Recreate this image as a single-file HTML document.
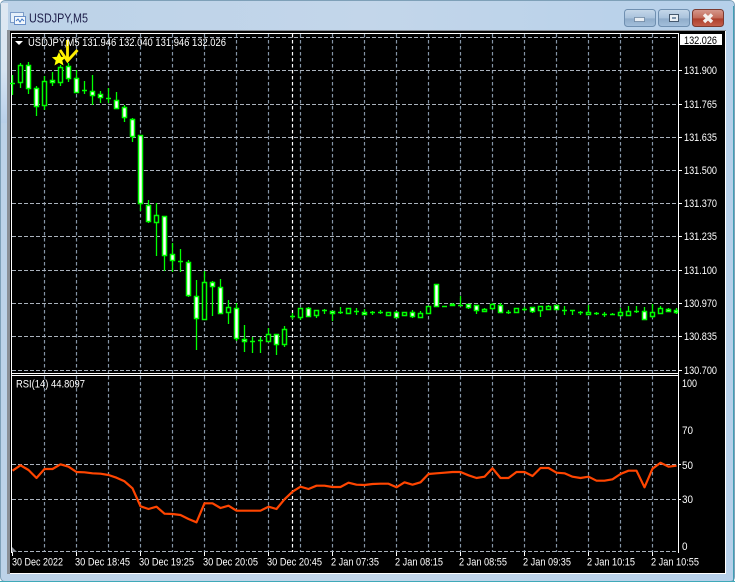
<!DOCTYPE html>
<html><head><meta charset="utf-8"><title>USDJPY,M5</title>
<style>
html,body{margin:0;padding:0;background:#fff;width:736px;height:583px;overflow:hidden}
svg{position:absolute;left:0;top:0;display:block}
text{font-family:"Liberation Sans",sans-serif}
</style></head><body>
<svg width="736" height="583" viewBox="0 0 736 583" xmlns="http://www.w3.org/2000/svg">
<defs>
<linearGradient id="tb" x1="0" y1="0" x2="1" y2="0"><stop offset="0" stop-color="#bcd2e8"/><stop offset=".5" stop-color="#c3d6ea"/><stop offset="1" stop-color="#b6d0ea"/></linearGradient>
<linearGradient id="gl" x1="0" y1="0" x2="0" y2="1"><stop offset="0" stop-color="#dfe8f2"/><stop offset=".55" stop-color="#d8e5f2"/><stop offset="1" stop-color="#b8d0ea"/></linearGradient>
<linearGradient id="btn" x1="0" y1="0" x2="0" y2="1"><stop offset="0" stop-color="#c6d8ea"/><stop offset=".5" stop-color="#a9c2dc"/><stop offset=".55" stop-color="#8facca"/><stop offset="1" stop-color="#a4c0dc"/></linearGradient>
<linearGradient id="cls" x1="0" y1="0" x2="0" y2="1"><stop offset="0" stop-color="#d69a8e"/><stop offset=".5" stop-color="#c26a58"/><stop offset=".55" stop-color="#ad3f2c"/><stop offset="1" stop-color="#c4604c"/></linearGradient>
</defs>
<rect x="0" y="0" width="735" height="582" rx="5" fill="#7ea0b8"/>
<rect x="1" y="1" width="733" height="580" rx="4" fill="url(#tb)"/>
<rect x="1" y="3" width="7" height="120" fill="url(#gl)"/>
<rect x="0" y="581" width="735" height="1" fill="#3fa9b8"/>
<rect x="733" y="6" width="1" height="575" fill="#3f9fb4"/>
<!-- icon -->
<rect x="10.500" y="12.500" width="13" height="10" fill="#e6f0fa" stroke="#7c9cc8"/>
<rect x="14.500" y="16.500" width="11" height="8" fill="#f4f8fc" stroke="#6a90c8"/>
<path d="M16 21l2-2 2 3 2-3 2 2" fill="none" stroke="#3f78c8"/>
<text x="29" y="22.500" font-size="13" fill="#1c1c48" textLength="59" lengthAdjust="spacingAndGlyphs">USDJPY,M5</text>
<!-- buttons -->
<rect x="624.500" y="9.500" width="31" height="17" rx="3" fill="url(#btn)" stroke="#6f8fb0"/>
<rect x="634.500" y="17.500" width="10" height="4" fill="#e8eef4" stroke="#55708c" stroke-width=".6"/>
<rect x="658.500" y="9.500" width="31" height="17" rx="3" fill="url(#btn)" stroke="#6f8fb0"/>
<rect x="669.500" y="14.500" width="9" height="7" fill="#e8eef4" stroke="#44586e"/>
<rect x="672" y="17" width="4" height="2" fill="#7c93ab"/>
<rect x="692.500" y="9.500" width="31" height="17" rx="3" fill="url(#cls)" stroke="#7c3a30"/>
<path d="M704 14.500l8 7.500M712 14.500l-8 7.500" stroke="#f4f0ee" stroke-width="3.400" fill="none"/>
<!-- client -->
<rect x="7" y="30" width="719" height="544" fill="#fff"/>
<rect x="8" y="31" width="717" height="542" fill="#000"/>
<rect x="7" y="30" width="3" height="544" fill="#8a8f96"/>
<rect x="7" y="30" width="719" height="1" fill="#8a8f96"/>
<rect x="11" y="33" width="1" height="520" fill="#fff"/>
<rect x="11" y="33" width="668" height="1" fill="#fff"/>
<rect x="678" y="33" width="1" height="520" fill="#fff"/>
<rect x="11" y="373" width="668" height="1" fill="#fff"/>
<rect x="11" y="375" width="668" height="1" fill="#fff"/>
<!-- grid -->
<g fill="none">
<g stroke-width="1.200" stroke-dasharray="3.500 2.500">
<path stroke="#8494a6" d="M44.500 34V373M76.500 34V373M108.500 34V373M140.500 34V373M172.500 34V373M204.500 34V373M236.500 34V373M268.500 34V373M300.500 34V373M332.500 34V373M364.500 34V373M396.500 34V373M428.500 34V373M460.500 34V373M492.500 34V373M524.500 34V373M556.500 34V373M588.500 34V373M620.500 34V373M652.500 34V373"/>
<path stroke="#8494a6" d="M44.500 376V552M76.500 376V552M108.500 376V552M140.500 376V552M172.500 376V552M204.500 376V552M236.500 376V552M268.500 376V552M300.500 376V552M332.500 376V552M364.500 376V552M396.500 376V552M428.500 376V552M460.500 376V552M492.500 376V552M524.500 376V552M556.500 376V552M588.500 376V552M620.500 376V552M652.500 376V552"/>
<path stroke="#fff" d="M292.500 34V373M292.500 376V552"/>
</g>
<g stroke-width="1" stroke-dasharray="4 2">
<path stroke="#aab2bc" d="M12 37.500H678M12 70.500H678M12 104.500H678M12 137.500H678M12 170.500H678M12 203.500H678M12 236.500H678M12 270.500H678M12 303.500H678M12 336.500H678M12 370.500H678"/>
<path stroke="#aab2bc" d="M12 464.500H678M12 499.500H678M12 551.500H678"/>
</g>
</g>
<!-- wicks -->
<path fill="none" stroke="#00ff00" stroke-width="1.300" d="M12.500 75V95M20.500 63V88M28.500 62V94M36.500 86V116M44.500 76V110M52.500 72V86M60.500 65V86M68.500 63V82M76.500 70V93M84.500 81V94M92.500 75V105M100.500 91V103M108.500 88V103M116.500 92V109M124.500 105V122M132.500 118V142M140.500 135V211M148.500 200V223M156.500 203V256M164.500 216V271M172.500 243V272M180.500 249V272M188.500 260V297M196.500 280V350M204.500 271V320M212.500 281V316M220.500 279V313M228.500 300V324M236.500 303V341M244.500 325V352M252.500 337V353M260.500 337V353M268.500 328V342M276.500 334V355M284.500 326V347M292.500 313V319M300.500 308V320M308.500 307V316M316.500 310V318M324.500 309V314M332.500 311V321M340.500 307V314M348.500 308V313M356.500 308V315M364.500 309V315M372.500 311V315M380.500 310V314M388.500 312V316M396.500 311V318M404.500 312V315M412.500 310V318M420.500 311V317M428.500 306V314M436.500 284V307M444.500 306V307M452.500 303V305M460.500 296V306M468.500 304V309M476.500 305V314M484.500 308V312M492.500 303V310M500.500 303V312M508.500 310V314M516.500 308V312M524.500 307V311M532.500 307V313M540.500 306V317M548.500 305V310M556.500 305V310M564.500 306V315M572.500 310V315M580.500 311V315M588.500 305V315M596.500 312V315M604.500 312V317M612.500 313V315M620.500 308V315M628.500 306V315M636.500 306V313M644.500 307V319M652.500 304V318M660.500 306V314M668.500 308V312M676.500 308V314"/>
<!-- dash bodies -->
<path fill="none" stroke="#00ff00" stroke-width="1.600" d="M10 83.500H15M82 90.500H87M106 98.500H111M178 261.500H183M250 341.500H255M258 340.500H263M290 316.500H295M322 310.500H327M338 312.500H343M354 311.500H359M370 312.500H375M378 312.500H383M442 306.500H447M458 305.500H463M506 312.500H511M522 309.500H527M562 310.500H567M570 310.500H575M578 312.500H583M594 313.500H599M602 314.500H607M610 314.500H615M634 311.500H639"/>
<!-- hollow bodies -->
<g fill="#000" stroke="#00ff00" stroke-width="1.500">
<rect x="18.500" y="65.500" width="4" height="17"/><rect x="42.500" y="81.500" width="4" height="24"/><rect x="58.500" y="67.500" width="4" height="15"/><rect x="154.500" y="215.500" width="4" height="7"/><rect x="202.500" y="282.500" width="4" height="37"/><rect x="226.500" y="307.500" width="4" height="5"/><rect x="266.500" y="334.500" width="4" height="7"/><rect x="282.500" y="329.500" width="4" height="15"/><rect x="298.500" y="308.500" width="4" height="9"/><rect x="314.500" y="310.500" width="4" height="5"/><rect x="346.500" y="308.500" width="4" height="5"/><rect x="386.500" y="312.500" width="4" height="3"/><rect x="402.500" y="312.500" width="4" height="3"/><rect x="418.500" y="313.500" width="4" height="4"/><rect x="426.500" y="306.500" width="4" height="7"/><rect x="482.500" y="309.500" width="4" height="2"/><rect x="490.500" y="304.500" width="4" height="4"/><rect x="514.500" y="308.500" width="4" height="4"/><rect x="538.500" y="306.500" width="4" height="4"/><rect x="546.500" y="306.500" width="4" height="3"/><rect x="586.500" y="312.500" width="4" height="2"/><rect x="618.500" y="312.500" width="4" height="3"/><rect x="626.500" y="311.500" width="4" height="4"/><rect x="650.500" y="312.500" width="4" height="4"/><rect x="658.500" y="308.500" width="4" height="5"/>
</g>
<!-- white bodies -->
<g fill="#fff" stroke="#00ff00" stroke-width="1.500">
<rect x="26.500" y="65.500" width="4" height="23"/><rect x="34.500" y="88.500" width="4" height="18"/><rect x="50.500" y="80.500" width="4" height="2"/><rect x="66.500" y="66.500" width="4" height="12"/><rect x="74.500" y="78.500" width="4" height="14"/><rect x="90.500" y="91.500" width="4" height="4"/><rect x="98.500" y="94.500" width="4" height="3"/><rect x="114.500" y="100.500" width="4" height="8"/><rect x="122.500" y="107.500" width="4" height="10"/><rect x="130.500" y="119.500" width="4" height="17"/><rect x="138.500" y="135.500" width="4" height="68"/><rect x="146.500" y="205.500" width="4" height="16"/><rect x="162.500" y="216.500" width="4" height="39"/><rect x="170.500" y="254.500" width="4" height="6"/><rect x="186.500" y="262.500" width="4" height="33"/><rect x="194.500" y="296.500" width="4" height="22"/><rect x="210.500" y="282.500" width="4" height="4"/><rect x="218.500" y="287.500" width="4" height="26"/><rect x="234.500" y="308.500" width="4" height="30"/><rect x="242.500" y="339.500" width="4" height="2"/><rect x="274.500" y="334.500" width="4" height="10"/><rect x="306.500" y="308.500" width="4" height="8"/><rect x="330.500" y="311.500" width="4" height="2"/><rect x="362.500" y="312.500" width="4" height="2"/><rect x="394.500" y="312.500" width="4" height="5"/><rect x="410.500" y="312.500" width="4" height="4"/><rect x="434.500" y="284.500" width="4" height="22"/><rect x="450.500" y="304.500" width="4" height="1"/><rect x="466.500" y="304.500" width="4" height="3"/><rect x="474.500" y="305.500" width="4" height="5"/><rect x="498.500" y="305.500" width="4" height="7"/><rect x="530.500" y="307.500" width="4" height="4"/><rect x="554.500" y="305.500" width="4" height="4"/><rect x="642.500" y="311.500" width="4" height="8"/><rect x="666.500" y="309.500" width="4" height="2"/><rect x="674.500" y="310.500" width="3" height="2"/>
</g>
<!-- RSI -->
<polyline fill="none" stroke="#ff4500" stroke-width="2.200" stroke-linejoin="round" points="12.500,470.700 20.500,465.300 28.500,470 36.500,478 44.500,469 52.500,469 60.500,464.300 68.500,466.700 76.500,472 84.500,472.300 92.500,473.300 100.500,473.700 108.500,475 116.500,477.700 124.500,481.300 132.500,488.300 140.500,506.300 148.500,509 156.500,506.700 164.500,513.700 172.500,514 180.500,515 188.500,519 196.500,522.300 204.500,503.300 212.500,503.300 220.500,508 228.500,505.700 236.500,510.700 244.500,510.700 252.500,510.700 260.500,510.700 268.500,506.700 276.500,509 284.500,499.300 292.500,491.700 300.500,486.700 308.500,489 316.500,485.700 324.500,485.700 332.500,487 340.500,487 348.500,482.700 356.500,484.700 364.500,485 372.500,484 380.500,483.700 388.500,483.700 396.500,487.300 404.500,482.300 412.500,484.700 420.500,482.300 428.500,474 436.500,473.300 444.500,472.700 452.500,472 460.500,472 468.500,475.300 476.500,478 484.500,476.700 492.500,468.300 500.500,478 508.500,478 516.500,472 524.500,472 532.500,476 540.500,468 548.500,468 556.500,472.700 564.500,473.300 572.500,476.700 580.500,478 588.500,476.700 596.500,480.700 604.500,480.700 612.500,479.300 620.500,474 628.500,470.700 636.500,470.700 644.500,487.300 652.500,468.700 660.500,462.700 668.500,466.700 676.500,465.700"/>
<path d="M12 547l5 5h-5z" fill="#8a8f96"/>
<!-- arrow and star -->
<path d="M59 52l2.100 4.800 5 .4-3.800 3.300 1.200 5-4.500-2.700-4.500 2.700 1.200-5-3.800-3.300 5-.4z" fill="#ffff00"/>
<path d="M67.500 40V61M60 50l7.500 11 10-11" fill="none" stroke="#ffee00" stroke-width="2.800"/>
<!-- header -->
<path d="M15 41h8l-4 4z" fill="#fff"/>
<g fill="#fff" font-size="11">
<text x="28" y="46" textLength="198" lengthAdjust="spacingAndGlyphs">USDJPY,M5  131.946 132.040 131.946 132.026</text>
<text x="16" y="387.500" textLength="69" lengthAdjust="spacingAndGlyphs">RSI(14) 44.8097</text>
</g>
<!-- axis ticks -->
<path stroke="#fff" fill="none" d="M678 70.500h4M678 104.500h4M678 137.500h4M678 170.500h4M678 203.500h4M678 236.500h4M678 270.500h4M678 303.500h4M678 336.500h4M678 370.500h4M678 464.500h3M678 499.500h3M12.500 552v4M76.500 552v4M140.500 552v4M204.500 552v4M268.500 552v4M332.500 552v4M396.500 552v4M460.500 552v4M524.500 552v4M588.500 552v4M652.500 552v4"/>
<rect x="680" y="34" width="42" height="11" fill="#fff"/>
<text x="684" y="44" font-size="11" fill="#000" textLength="33" lengthAdjust="spacingAndGlyphs">132.026</text>
<g fill="#fff" font-size="11" lengthAdjust="spacingAndGlyphs">
<text x="684" y="74" textLength="33" lengthAdjust="spacingAndGlyphs">131.900</text>
<text x="684" y="108" textLength="33" lengthAdjust="spacingAndGlyphs">131.765</text>
<text x="684" y="141" textLength="33" lengthAdjust="spacingAndGlyphs">131.635</text>
<text x="684" y="174" textLength="33" lengthAdjust="spacingAndGlyphs">131.500</text>
<text x="684" y="207" textLength="33" lengthAdjust="spacingAndGlyphs">131.370</text>
<text x="684" y="240" textLength="33" lengthAdjust="spacingAndGlyphs">131.235</text>
<text x="684" y="274" textLength="33" lengthAdjust="spacingAndGlyphs">131.100</text>
<text x="684" y="307" textLength="33" lengthAdjust="spacingAndGlyphs">130.970</text>
<text x="684" y="340" textLength="33" lengthAdjust="spacingAndGlyphs">130.835</text>
<text x="684" y="374" textLength="33" lengthAdjust="spacingAndGlyphs">130.700</text>
<text x="682" y="387" textLength="15" lengthAdjust="spacingAndGlyphs">100</text>
<text x="682" y="434" textLength="11" lengthAdjust="spacingAndGlyphs">70</text>
<text x="682" y="469" textLength="11" lengthAdjust="spacingAndGlyphs">50</text>
<text x="682" y="503" textLength="11" lengthAdjust="spacingAndGlyphs">30</text>
<text x="682" y="550" textLength="5.500" lengthAdjust="spacingAndGlyphs">0</text>
<text x="12" y="565.500" textLength="51" lengthAdjust="spacingAndGlyphs">30 Dec 2022</text>
<text x="75" y="565.500" textLength="55" lengthAdjust="spacingAndGlyphs">30 Dec 18:45</text>
<text x="139" y="565.500" textLength="55" lengthAdjust="spacingAndGlyphs">30 Dec 19:25</text>
<text x="203" y="565.500" textLength="55" lengthAdjust="spacingAndGlyphs">30 Dec 20:05</text>
<text x="267" y="565.500" textLength="55" lengthAdjust="spacingAndGlyphs">30 Dec 20:45</text>
<text x="331" y="565.500" textLength="48" lengthAdjust="spacingAndGlyphs">2 Jan 07:35</text>
<text x="395" y="565.500" textLength="48" lengthAdjust="spacingAndGlyphs">2 Jan 08:15</text>
<text x="459" y="565.500" textLength="48" lengthAdjust="spacingAndGlyphs">2 Jan 08:55</text>
<text x="523" y="565.500" textLength="48" lengthAdjust="spacingAndGlyphs">2 Jan 09:35</text>
<text x="587" y="565.500" textLength="48" lengthAdjust="spacingAndGlyphs">2 Jan 10:15</text>
<text x="651" y="565.500" textLength="48" lengthAdjust="spacingAndGlyphs">2 Jan 10:55</text>
</g>
</svg>
</body></html>
